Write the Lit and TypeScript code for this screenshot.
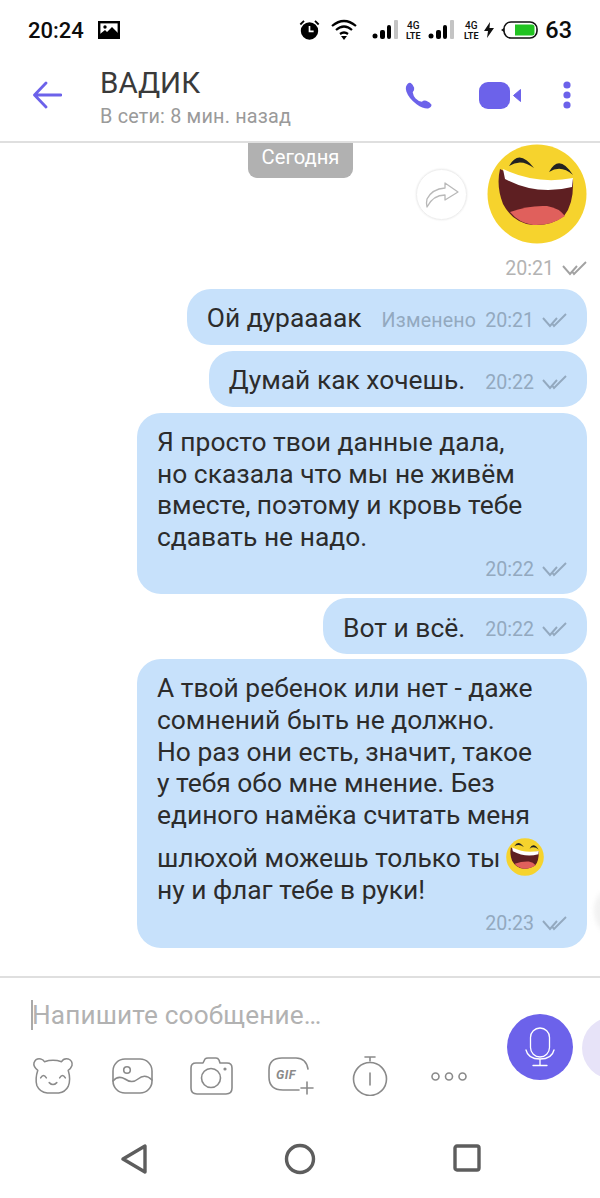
import { LitElement, html, css, svg } from "lit";
import { customElement } from "lit/decorators.js";

const face = svg`
  <circle cx="50" cy="50" r="49.5" fill="#f6d32d"/>
  <path d="M13 25Q50 44 86 35Q87 60 77 72Q64 82 46 81Q26 79 16 60Q9 42 13 25Z" fill="#5e1f22"/>
  <path d="M23 68Q42 61 60 62Q72 64 78 72Q64 82 46 81Q32 79 23 68Z" fill="#e0605c"/>
  <path d="M16 25Q50 41 86 34L85 43Q50 52 18 35Z" fill="#fff"/>
  <path d="M22 22Q32 4 47 24Q34 14 22 22ZM62 28Q72 9 86 31Q74 20 62 28Z" fill="#222"/>`;

const ticks = svg`<path d="M1 5L8 13L15 5M10.500 11L12 13L24 1" fill="none" stroke-width="1.900"/>`;

const tickIcon = html`<svg class="ticks" width="25" height="16" viewBox="0 0 25 16">${ticks}</svg>`;

const meta = (time: string, edited = false) => html`<span class="meta">
  ${edited ? html`<span class="edited">Изменено</span>` : ""}
  <span>${time}</span>
  ${tickIcon}
</span>`;

const signal = svg`<circle cx="3" cy="16" r="2.5" fill="#000"/><rect x="8" y="10" width="5" height="9" rx="2" fill="#000"/><rect x="15" y="5" width="4" height="14" rx="2" fill="#000"/><rect x="22" y="0" width="4" height="19" rx="1" fill="#c4c4c4"/>`;
const lte = svg`<text x="1" y="9" font-size="10" font-family="Roboto" font-weight="500">4G</text><text x="0" y="19" font-size="9" font-family="Roboto" font-weight="700">LTE</text>`;

@customElement("app-root")
export class AppRoot extends LitElement {
  static styles = css`
    :host { display: block; width: 600px; height: 1198px; background: #fff; font-family: Roboto, "Noto Sans", sans-serif; overflow: hidden; position: relative; }
    .status { height: 60px; display: flex; align-items: center; padding: 0 28px 0 28px; color: #0c0c0c; }
    .clock { font-size: 22px; font-weight: 500; width: 70px; }
    .status .gap { flex: 1; }
    .status .right { display: flex; align-items: center; }
    .batt { font-size: 23.500px; font-weight: 500; margin-left: 7px; }
    .header { height: 81px; display: flex; align-items: flex-start; border-bottom: 2px solid #dfdfdf; }
    .back { margin: 21px 0 0 32px; width: 30px; height: 28px; }
    .who { margin: 5px 0 0 38px; flex: 1; }
    .name { font-size: 29.500px; color: #3a3a3a; line-height: 37px; }
    .seen { font-size: 19.800px; color: #9a9a9a; line-height: 24px; margin-top: 3px; letter-spacing: .2px; }
    .actions { display: flex; align-items: center; margin-top: 21px; padding-right: 29px; }
    .chat { height: 833px; position: relative; display: flex; flex-direction: column; align-items: flex-end; padding: 3px 13px 0 0; box-sizing: border-box; }
    .date { position: absolute; left: 248px; top: 0; width: 105px; height: 35px; background: #b1b1b1; color: #fff; border-radius: 0 0 9px 9px; font-size: 20.200px; display: flex; align-items: center; justify-content: center; padding-bottom: 7px; box-sizing: border-box; }
    .sticker { display: flex; align-items: center; gap: 20px; height: 96px; }
    .fwd { width: 51px; height: 51px; box-sizing: border-box; border-radius: 50%; border: 1px solid #eee; display: flex; align-items: center; justify-content: center; box-shadow: 0 0 2px #e4e4e4; margin-top: 1px; }
    .sticker-meta { margin: 15px 0 8px; height: 24px; }
    .bubble { background: #c7e1fb; border-radius: 24px; color: #2c2c2c; font-size: 26.400px; line-height: 31.600px; box-sizing: border-box; padding: 0 20px; }
    .row { display: flex; align-items: center; height: 56px; gap: 20px; padding-top: 4px; }
    .row .meta { margin-top: 3px; }
    .block { width: 450px; padding-top: 14px; padding-bottom: 12px; }
    .block .meta { display: flex; justify-content: flex-end; margin-top: 5px; height: 24px; }
    .meta { display: inline-flex; align-items: center; gap: 8px; font-size: 19.600px; line-height: 24px; color: #93a9bf; }
    .meta .edited { margin-right: 1px; letter-spacing: .2px; }
    .ticks { stroke: currentColor; display: block; }
    .plain { color: #b3b3b3; }
    .plain .ticks { stroke: #a2a2a2; }
    .t2 { margin-top: 6px; }
    .t3 { margin-top: 4px; }
    .t5 { margin-top: 5px; }
    .emoji { display: block; }
    .inl { display: inline-block; vertical-align: -6px; margin: 7px 0 -3px 5px; }
    .edge { position: absolute; right: -30px; top: 745px; width: 36px; height: 46px; border-radius: 50%; background: #f2f2f2; filter: blur(2px); }
    .compose { height: 150px; border-top: 2px solid #dfdfdf; position: relative; display: flex; padding-left: 31px; }
    .left { flex: 1; }
    .input { display: flex; align-items: center; height: 34px; margin-top: 20px; font-size: 26.200px; color: #b2b2b2; letter-spacing: .15px; }
    .caret { width: 2px; height: 30px; background: #a9a9a9; margin-right: -1px; }
    .tools { display: flex; align-items: center; margin-top: 24px; height: 40px; }
    .tools svg { fill: none; stroke: #8a8a8a; stroke-width: 1.6; stroke-linecap: round; stroke-linejoin: round; display: block; }
    .mic { width: 66px; height: 66px; border-radius: 50%; background: #6c62ea; display: flex; align-items: center; justify-content: center; margin: 36px 27px 0 0; flex: none; }
    .peek { position: absolute; right: -44px; top: 39px; width: 62px; height: 62px; border-radius: 50%; background: #e7e3f8; }
    .nav { height: 70px; display: flex; align-items: flex-start; }
    .nav svg { display: block; fill: none; stroke: #5d5d5d; stroke-width: 3.400; stroke-linejoin: round; }
    .m-alarm { margin-right: 11px; }
    .m-wifi { margin-right: 15px; }
    .m-8 { margin-left: 8px; }
    .m-6 { margin-left: 6px; }
    .m-10 { margin-left: 10px; }
    .m-phone { margin-right: 47px; }
    .m-video { margin-right: 42px; }
  `;

  render() {
    return html`
      <div class="status">
        <span class="clock">20:24</span>
        <svg width="22" height="18" viewBox="0 0 22 18"><rect x="1.200" y="1.200" width="19.600" height="15.600" fill="#fff" stroke="#000" stroke-width="2.400"/><path d="M2 16V13L7 9L9 11L14 6L20 12V16Z" fill="#000"/><circle cx="7" cy="6" r="1.700" fill="#000"/></svg>
        <span class="gap"></span>
        <span class="right">
          <svg class="m-alarm" width="21" height="22" viewBox="0 0 22 24"><circle cx="11" cy="13" r="9.500" fill="#000"/><path d="M11 7.500V13.500H15.500" stroke="#fff" stroke-width="1.800" fill="none"/><path d="M1 6L5 2M21 6L17 2" stroke="#000" stroke-width="2"/></svg>
          <svg class="m-wifi" width="26" height="22" viewBox="0 0 26 22" fill="none" stroke="#000" stroke-width="2.200"><path d="M1 7Q13 -3 25 7M5 11Q13 4 21 11M9 15Q13 12 17 15"/><path d="M10 17L13 21L16 17Z" fill="#000" stroke="none"/></svg>
          <svg width="26" height="20" viewBox="0 0 26 20">${signal}</svg>
          <svg class="m-8" width="16" height="20" viewBox="0 0 16 20" fill="#111">${lte}</svg>
          <svg class="m-6" width="26" height="20" viewBox="0 0 26 20">${signal}</svg>
          <svg class="m-10" width="16" height="20" viewBox="0 0 16 20" fill="#111">${lte}</svg>
          <svg style="margin-left:4px" width="10" height="16" viewBox="0 0 10 16"><path d="M6 0L0 9H4L3 16L10 6H5.500Z" fill="#111"/></svg>
          <svg style="margin-left:7px" width="37" height="18" viewBox="0 0 37 18"><path d="M0 9L3 7V11Z" fill="#111"/><rect x="3" y="1" width="33" height="16" rx="7" fill="#fff" stroke="#111" stroke-width="1.600"/><path d="M14 3.500H31Q33.500 3.500 33.500 6V12Q33.500 14.500 31 14.500H14Z" fill="#22c322"/></svg>
          <span class="batt">63</span>
        </span>
      </div>
      <div class="header">
        <svg class="back" viewBox="0 0 30 28" fill="none" stroke="#6c62ea" stroke-width="2.800" stroke-linecap="round" stroke-linejoin="round"><path d="M29 14H3M14 2L2.500 14L14 26"/></svg>
        <div class="who">
          <div class="name">ВАДИК</div>
          <div class="seen">В сети: 8 мин. назад</div>
        </div>
        <div class="actions">
          <svg class="m-phone" width="27" height="27" viewBox="0 0 28 28"><path d="M1 5Q3 0 6 1Q8 2 9.500 6Q10 9 8 10.500Q8.500 14 11 17Q14 20 17.500 20.500Q19.500 18.500 22 19.500Q26 21 27.500 23.500Q27.500 26 24 27.500Q19 28 12 23Q4 17 1.500 10Q0.500 7 1 5Z" fill="#6c62ea"/></svg>
          <svg class="m-video" width="42" height="27" viewBox="0 0 42 27"><rect x="0" y="0" width="31" height="27" rx="9" fill="#6c62ea"/><path d="M34.500 13.500L41.500 7.500V19.500Z" fill="#6c62ea" stroke="#6c62ea" stroke-linejoin="round"/></svg>
          <svg width="8" height="28" viewBox="0 0 8 28" fill="#6c62ea"><circle cx="4" cy="4" r="3.600"/><circle cx="4" cy="14" r="3.600"/><circle cx="4" cy="24" r="3.600"/></svg>
        </div>
      </div>
      <div class="chat">
        <div class="date">Сегодня</div>
        <div class="sticker">
          <div class="fwd">
            <svg width="34" height="26" viewBox="0 0 34 26" fill="none" stroke="#b9b9b9" stroke-width="1.300" stroke-linejoin="round"><path d="M20 1L33 10L20 18V13Q8 13 2 25Q1 21 2 17Q7 7 20 6Z"/></svg>
          </div>
          <svg class="emoji" width="100" height="100" viewBox="0 0 100 100">${face}</svg>
        </div>
        <div class="meta plain sticker-meta">
          <span>20:21</span>
          ${tickIcon}
        </div>
        <div class="bubble row"><span>Ой дураааак</span>${meta("20:21", true)}</div>
        <div class="bubble row t2"><span>Думай как хочешь.</span>${meta("20:22")}</div>
        <div class="bubble block t2">
          Я просто твои данные дала,<br>но сказала что мы не живём<br>вместе, поэтому и кровь тебе<br>сдавать не надо.
          ${meta("20:22")}
        </div>
        <div class="bubble row t3"><span>Вот и всё.</span>${meta("20:22")}</div>
        <div class="bubble block t5">
          А твой ребенок или нет - даже<br>сомнений быть не должно.<br>Но раз они есть, значит, такое<br>у тебя обо мне мнение. Без<br>единого намёка считать меня<br>шлюхой можешь только ты<svg class="inl" width="38" height="38" viewBox="0 0 100 100">${face}</svg><br>ну и флаг тебе в руки!
          ${meta("20:23")}
        </div>
        <div class="edge"></div>
      </div>
      <div class="compose">
        <div class="left">
          <div class="input"><span class="caret"></span>Напишите сообщение…</div>
          <div class="tools">
            <svg style="margin-left:1px" width="42" height="38" viewBox="0 0 44 40"><path d="M6 14Q1 10 2 6Q4 1 9 2Q12 3 13 5Q22 2 31 5Q33 1 38 2Q43 4 42 9Q41 12 38 14Q41 24 38 31Q35 37 28 38H16Q8 37 5 30Q3 23 6 14Z"/><path d="M9 22Q12 17 15 22M29 22Q32 17 35 22M18 27Q22 31 26 27"/></svg>
            <svg style="margin-left:38px" width="41" height="36" viewBox="0 0 41 36"><rect x="1" y="1" width="39" height="34" rx="12"/><circle cx="15" cy="12" r="3.300"/><path d="M1 23Q6 17 13 21Q20 26 26 21Q33 15 40 22"/></svg>
            <svg style="margin-left:37px" width="43" height="38" viewBox="0 0 43 38"><path d="M6 6H13L15 2Q16 1 18 1H26Q28 1 29 3L30 6H37Q42 6 42 11V31Q42 37 36 37H7Q1 37 1 31V11Q1 6 6 6Z"/><circle cx="21" cy="21" r="9.500"/><circle cx="35" cy="12" r=".8" fill="#8a8a8a"/></svg>
            <svg style="margin-left:35px" width="46" height="38" viewBox="0 0 46 38"><path d="M31 33H15Q1 33 1 20V13Q1 1 14 1H28Q38 1 40 12"/><text x="8" y="22" font-size="12.500" font-family="Roboto" font-weight="700" font-style="italic" stroke="none" fill="#8a8a8a" letter-spacing=".5">GIF</text><path d="M33 31H45M39 25V37"/></svg>
            <svg style="margin-left:38px" width="36" height="40" viewBox="0 0 36 40"><circle cx="18" cy="23" r="16.500"/><path d="M18 5V1M13 1H23M18 17V29"/></svg>
            <svg style="margin-left:43px" width="36" height="9" viewBox="0 0 36 9"><circle cx="4.500" cy="4.500" r="3.500"/><circle cx="18" cy="4.500" r="3.500"/><circle cx="31.500" cy="4.500" r="3.500"/></svg>
          </div>
        </div>
        <div class="mic">
          <svg width="30" height="40" viewBox="0 0 30 40" fill="none" stroke="#fff" stroke-width="1.300" stroke-linecap="round"><rect x="5.500" y="1" width="19" height="29" rx="9.500"/><path d="M1 23Q3 32 15 32Q27 32 29 23M15 32V38M8 38.500H22"/></svg>
        </div>
        <div class="peek"></div>
      </div>
      <div class="nav">
        <svg style="margin:16px 0 0 120px" width="27" height="30" viewBox="0 0 27 30"><path d="M3 15L25 2V28Z"/></svg>
        <svg style="margin:15px 0 0 137px" width="32" height="32" viewBox="0 0 32 32"><circle cx="16" cy="16" r="13.500"/></svg>
        <svg style="margin:16px 0 0 137px" width="28" height="28" viewBox="0 0 28 28"><rect x="2" y="2" width="24" height="24" rx="2"/></svg>
      </div>
    `;
  }
}
